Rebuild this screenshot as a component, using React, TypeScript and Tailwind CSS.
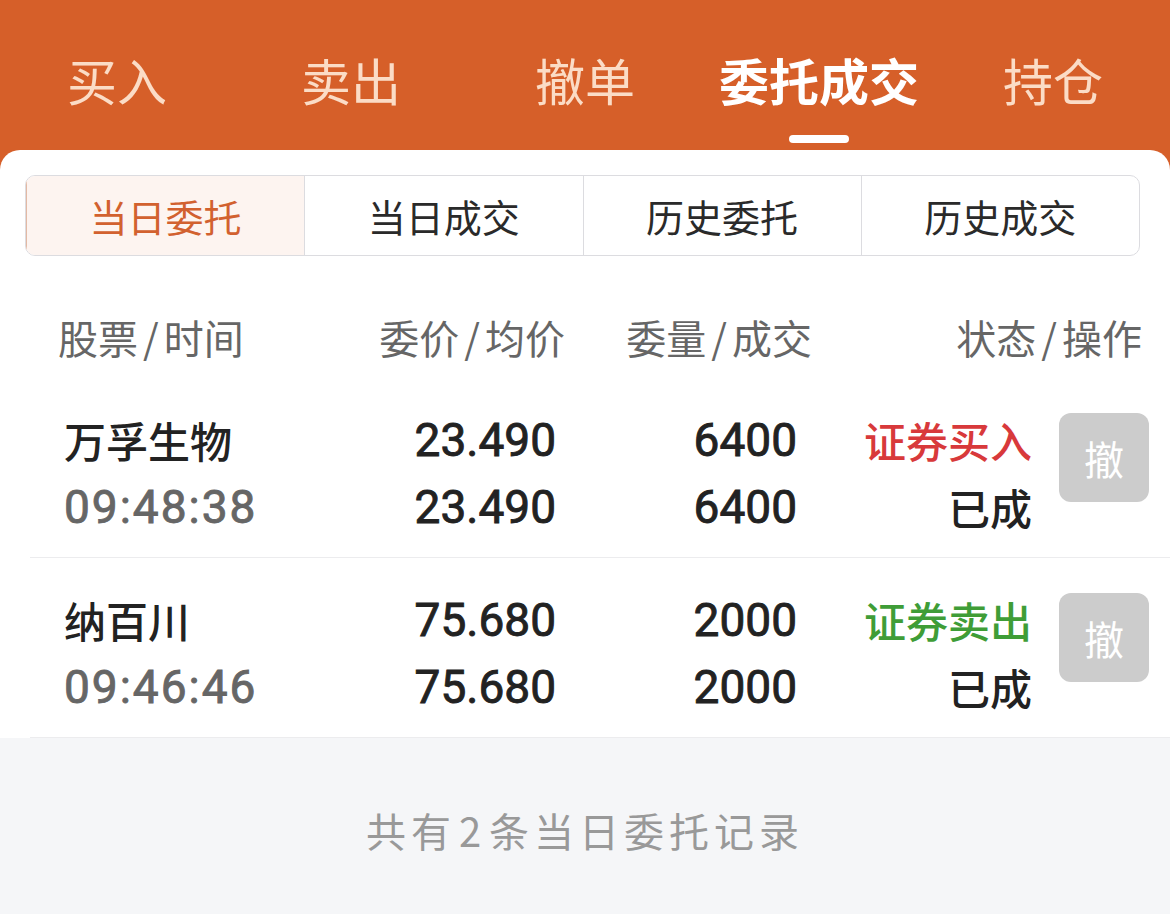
import React from 'react';

const cjk = "font-['Noto_Sans_CJK_SC',sans-serif]";
const num = "font-['Roboto','Noto_Sans_CJK_SC',sans-serif] [-webkit-text-stroke:0.9px_currentColor]";

const tabs = ['买入', '卖出', '撤单', '委托成交', '持仓'];
const segments = ['当日委托', '当日成交', '历史委托', '历史成交'];

type Order = {
  name: string;
  time: string;
  price: string;
  avg: string;
  qty: string;
  done: string;
  side: string;
  buy: boolean;
  status: string;
};

const orders: Order[] = [
  { name: '万孚生物', time: '09:48:38', price: '23.490', avg: '23.490', qty: '6400', done: '6400', side: '证券买入', buy: true, status: '已成' },
  { name: '纳百川', time: '09:46:46', price: '75.680', avg: '75.680', qty: '2000', done: '2000', side: '证券卖出', buy: false, status: '已成' },
];

const TopTabs = () => (
  <div className="bg-[#d65f29] h-[150px] flex">
    {tabs.map((t) => {
      const active = t === '委托成交';
      return (
        <div key={t} className="flex-1 flex flex-col items-center">
          <div
            className={`mt-[51px] h-[56px] leading-[56px] text-[50px] ${cjk} ${
              active ? 'font-bold text-white' : 'text-[#fbdcc6]'
            }`}
          >
            {t}
          </div>
          {active && <div className="mt-[28px] w-[60px] h-[8px] rounded-full bg-white" />}
        </div>
      );
    })}
  </div>
);

const Segmented = () => (
  <div className="mt-[25px] ml-[25px] mr-[30px] h-[81px] flex rounded-[10px] border border-[#dcdce0] overflow-hidden">
    {segments.map((s, i) => (
      <div
        key={s}
        className={`flex-1 flex items-center justify-center text-[38px] ${cjk} ${
          i === 0 ? 'bg-[#fdf4f0] text-[#d2612f] border-l-2 border-[#e3b9a4] -ml-px' : 'border-l border-[#dcdce0] text-[#2a2a2a]'
        }`}
      >
        {s}
      </div>
    ))}
  </div>
);

const Head = ({ a, b }: { a: string; b: string }) => (
  <>
    {a}
    <span className="mx-[5px]">/</span>
    {b}
  </>
);

const HeaderRow = () => (
  <div className={`pt-[59px] pb-[19px] pl-[58px] flex h-[122px] leading-[44px] text-[40px] text-[#666] ${cjk}`}>
    <div className="w-[300px]">
      <Head a="股票" b="时间" />
    </div>
    <div className="w-[207px] text-right">
      <Head a="委价" b="均价" />
    </div>
    <div className="w-[247px] text-right">
      <Head a="委量" b="成交" />
    </div>
    <div className="w-[330px] text-right">
      <Head a="状态" b="操作" />
    </div>
  </div>
);

const Row = ({ o }: { o: Order }) => (
  <div className="ml-[30px] border-b border-[#ececee] pt-[32px] pb-[20px] flex items-start">
    <div className="pl-[34px] w-[364px] flex flex-col gap-[7px]">
      <div className={`h-[60px] leading-[60px] text-[42px] font-medium text-[#222] ${cjk}`}>{o.name}</div>
      <div className={`h-[60px] leading-[60px] text-[46px] text-[#666] tracking-[2px] ${num}`}>{o.time}</div>
    </div>
    <div className="w-[162px] flex flex-col gap-[7px] text-right">
      <div className={`h-[60px] leading-[60px] text-[46px] text-[#222] ${num}`}>{o.price}</div>
      <div className={`h-[60px] leading-[60px] text-[46px] text-[#222] ${num}`}>{o.avg}</div>
    </div>
    <div className="w-[241px] flex flex-col gap-[7px] text-right">
      <div className={`h-[60px] leading-[60px] text-[46px] text-[#222] ${num}`}>{o.qty}</div>
      <div className={`h-[60px] leading-[60px] text-[46px] text-[#222] ${num}`}>{o.done}</div>
    </div>
    <div className="w-[235px] flex flex-col gap-[7px] text-right">
      <div
        className={`h-[60px] leading-[60px] text-[42px] font-medium ${cjk} ${
          o.buy ? 'text-[#d8393b]' : 'text-[#3f9d37]'
        }`}
      >
        {o.side}
      </div>
      <div className={`h-[60px] leading-[60px] text-[42px] font-medium text-[#222] ${cjk}`}>{o.status}</div>
    </div>
    <button
      className={`ml-[27px] mt-[3px] w-[90px] h-[89px] rounded-[12px] bg-[#cccccc] text-white text-[40px] flex items-center justify-center ${cjk}`}
    >
      撤
    </button>
  </div>
);

export default function App() {
  return (
    <div className="w-[1170px] h-[914px] overflow-hidden bg-[#d65f29] flex flex-col">
      <TopTabs />
      <div className="flex-1 bg-white rounded-t-[20px] flex flex-col overflow-hidden">
        <Segmented />
        <HeaderRow />
        {orders.map((o) => (
          <Row key={o.name} o={o} />
        ))}
        <div
          className={`flex-1 bg-[#f5f6f8] flex items-center justify-center pt-[8px] text-[40px] tracking-[5px] text-[#999] ${cjk}`}
        >
          共有<span className="mx-[3px]">2</span>条当日委托记录
        </div>
      </div>
    </div>
  );
}
